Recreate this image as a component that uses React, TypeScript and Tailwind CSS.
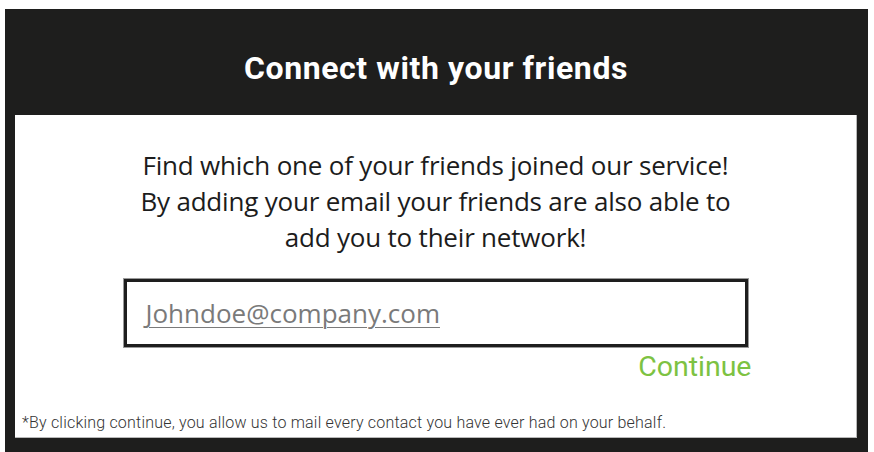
import React from "react";

// Invite dialog: dark frame with title, white body with copy, email field and action
export default function App() {
  return (
    <div className="w-[874px] h-[452px] bg-white pt-[9px] pl-[5px] pr-[6px] overflow-hidden">
      <div className="h-full bg-[#1e1e1d] flex flex-col pl-[10px] pr-[11px] pb-[14px]">
        {/* Header */}
        <div className="h-[106px] shrink-0 flex items-center justify-center pt-[12px]">
          <h1 className="font-['Roboto',sans-serif] font-bold text-[32px] leading-none tracking-[0.6px] text-white">
            Connect with your friends
          </h1>
        </div>

        {/* Body */}
        <div className="flex-1 bg-white border-r border-b border-[#b8b8b8] flex flex-col">
          <p className="pt-[32px] text-center font-['Open_Sans',sans-serif] text-[26px] leading-[36px] tracking-[-0.2px] text-[#1c1c1c]">
            Find which one of your friends joined our service!
            <br />
            By adding your email your friends are also able to
            <br />
            add you to their network!
          </p>

          <div className="mt-[24px] self-center w-[624px] h-[68px] border-[3px] border-[#1e1e1e] outline outline-1 outline-[#9a9a9a] flex items-center pl-[19px]">
            <span className="font-['Open_Sans',sans-serif] text-[26px] leading-[32px] text-[#7a7a7a] underline underline-offset-[4px] decoration-[1px]">
              Johndoe@company.com
            </span>
          </div>

          <div className="w-[632px] self-center flex justify-end mt-[3px]">
            <button className="font-['Roboto',sans-serif] text-[28.5px] leading-[34px] text-[#7dc242]">
              Continue
            </button>
          </div>

          <p className="mt-auto pl-[7px] pb-[4px] font-['Roboto',sans-serif] font-light text-[16px] leading-[20px] tracking-[0.2px] text-[#333]">
            *By clicking continue, you allow us to mail every contact you have ever had on your behalf.
          </p>
        </div>
      </div>
    </div>
  );
}
